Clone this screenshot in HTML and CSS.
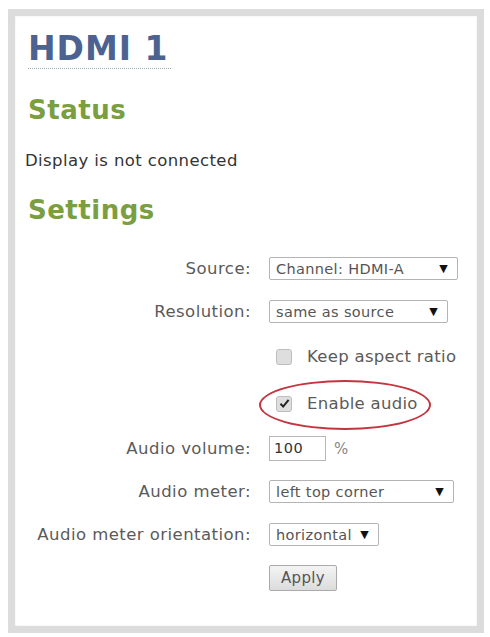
FILE: index.html
```html
<!DOCTYPE html>
<html lang="en">
<head>
  <meta charset="UTF-8">
  <meta name="viewport" content="width=device-width, initial-scale=1.0">
  <title>HDMI 1</title>
  <link rel="stylesheet" href="styles.css">
</head>
<body>
  <div class="panel">
    <h1><span>HDMI 1</span></h1>
    <h2 class="status-title">Status</h2>
    <p class="status">Display is not connected</p>
    <h2 class="settings-title">Settings</h2>

    <div class="form">
      <div class="row">
        <label class="lbl">Source:</label>
        <div class="ctl"><span class="select w-source">Channel: HDMI-A <i>▼</i></span></div>
      </div>
      <div class="row">
        <label class="lbl">Resolution:</label>
        <div class="ctl"><span class="select w-res">same as source <i>▼</i></span></div>
      </div>
      <div class="row check-row">
        <span class="lbl"></span>
        <div class="ctl"><span class="check"></span><span class="check-text">Keep aspect ratio</span></div>
      </div>
      <div class="row check-row">
        <span class="lbl"></span>
        <div class="ctl">
          <span class="check on"><svg width="11" height="11" viewBox="0 0 11 11"><path d="M1.5 5.8 L4.2 8.6 L9.6 1.8" fill="none" stroke="#222" stroke-width="2"/></svg></span><span class="check-text">Enable audio</span>
          <span class="circle"></span>
        </div>
      </div>
      <div class="row">
        <label class="lbl">Audio volume:</label>
        <div class="ctl"><span class="input">100</span><span class="unit">%</span></div>
      </div>
      <div class="row">
        <label class="lbl">Audio meter:</label>
        <div class="ctl"><span class="select w-meter">left top corner <i>▼</i></span></div>
      </div>
      <div class="row">
        <label class="lbl">Audio meter orientation:</label>
        <div class="ctl"><span class="select w-orient">horizontal <i>▼</i></span></div>
      </div>
      <div class="row">
        <span class="lbl"></span>
        <div class="ctl"><button class="apply">Apply</button></div>
      </div>
    </div>
  </div>
</body>
</html>
```

FILE: styles.css
```css
body {
  margin: 0;
  background: #fff;
  font-family: 'DejaVu Sans', Verdana, sans-serif;
  color: #333;
}
.panel {
  margin: 9px 6px 4px 8px;
  border: 7px solid #dcdcdc;
  padding: 0 13px 27px 13px;
  box-shadow: inset 0 0 2px #e8e8e8;
}
h1 {
  margin: 14px 0 0;
  font-size: 33px;
  line-height: 38px;
  letter-spacing: 1px;
  color: #4c6391;
}
h1 span {
  display: inline-block;
  border-bottom: 1px dotted #9aa;
  padding-right: 2px;
}
h2 {
  font-size: 26px;
  line-height: 32px;
  letter-spacing: 0.5px;
  color: #7a9e40;
  margin: 0;
}
.status-title {
  margin-top: 25px;
}
.status {
  margin: 25px 0 0 -3px;
  font-size: 16.5px;
  line-height: 20px;
  letter-spacing: 0.4px;
  color: #333;
}
.settings-title {
  margin-top: 23px;
}
.form {
  margin-top: 21px;
}
.row {
  display: grid;
  grid-template-columns: 223px 1fr;
  column-gap: 18px;
  align-items: center;
  height: 43px;
}
.check-row {
  height: 47px;
}
.lbl {
  text-align: right;
  font-size: 16.5px;
  letter-spacing: 0.45px;
  color: #5a5a5a;
}
.ctl {
  display: flex;
  align-items: center;
  position: relative;
}
.select {
  display: flex;
  justify-content: space-between;
  align-items: center;
  box-sizing: border-box;
  height: 23px;
  border: 1px solid #b4b4b4;
  border-radius: 2px;
  padding: 0 9px 0 6px;
  font-size: 14.5px;
  letter-spacing: 0.35px;
  color: #555;
}
.select i {
  font-style: normal;
  font-size: 11px;
  color: #111;
}
.w-source { width: 189px; }
.w-res { width: 179px; }
.w-meter { width: 185px; }
.w-orient { width: 110px; }
.check {
  box-sizing: border-box;
  width: 16px;
  height: 16px;
  margin-left: 7px;
  border: 1px solid #bdbdbd;
  border-radius: 3px;
  background: #dedede;
  display: flex;
  align-items: center;
  justify-content: center;
}
.check-text {
  margin-left: 15px;
  font-size: 16.5px;
  letter-spacing: 0.3px;
  color: #5a5a5a;
}
.circle {
  position: absolute;
  left: -10px;
  top: calc(50% - 24px);
  width: 168px;
  height: 46px;
  border: 2px solid #c4353f;
  border-radius: 50%;
}
.input {
  box-sizing: border-box;
  width: 57px;
  height: 25px;
  border: 1px solid #b8b8b8;
  padding: 3px 0 0 4px;
  font-size: 14.5px;
  letter-spacing: 0.5px;
  color: #333;
}
.unit {
  margin-left: 8px;
  font-size: 15px;
  color: #888;
}
.apply {
  box-sizing: border-box;
  width: 68px;
  height: 26px;
  border: 1px solid #aaa;
  border-radius: 2px;
  background: linear-gradient(#f4f4f4, #dcdcdc);
  font-family: 'DejaVu Sans', Verdana, sans-serif;
  font-size: 15px;
  letter-spacing: 0.3px;
  color: #555;
  padding: 0;
}
```
